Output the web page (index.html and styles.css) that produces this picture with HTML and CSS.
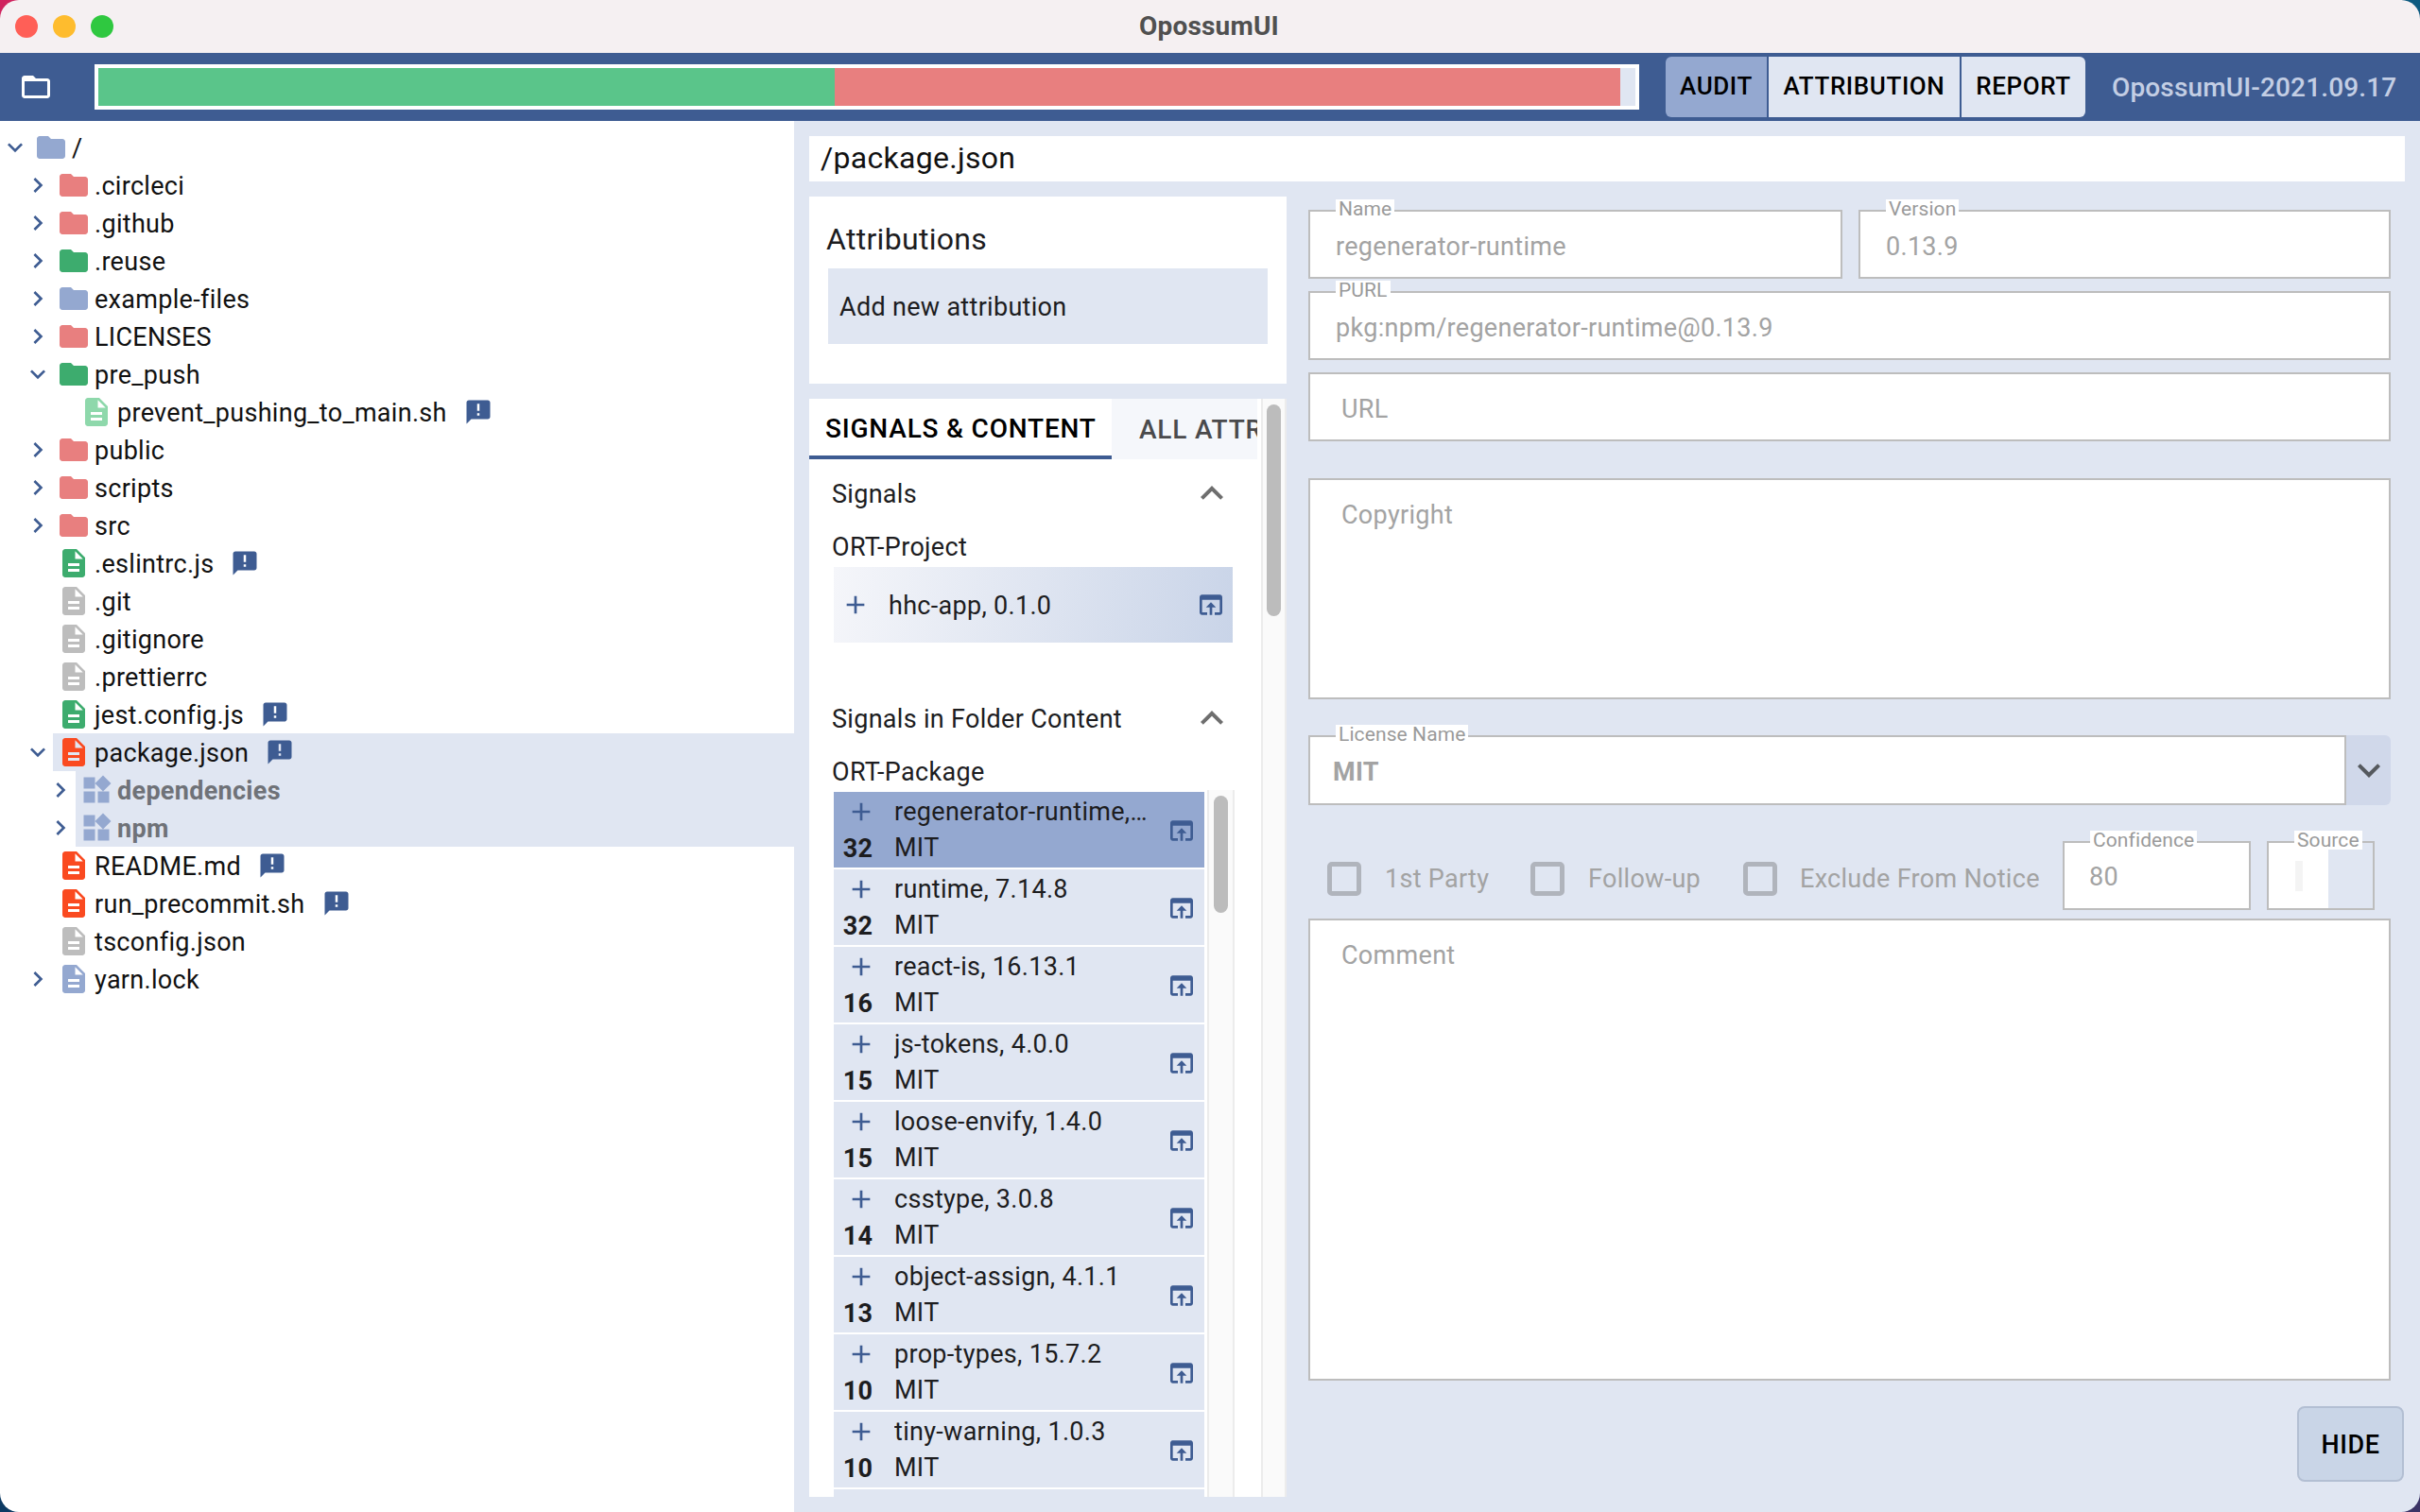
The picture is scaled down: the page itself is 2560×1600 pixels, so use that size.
FILE: index.html
```html
<!DOCTYPE html>
<html lang="en">
<head>
	<meta charset="UTF-8">
	<title>OpossumUI</title>
	<link rel="stylesheet" href="styles.css">
</head>
<body>
	<svg class="defs" width="0" height="0">
		<symbol id="i-right" viewBox="0 0 24 24"><path d="M10 6L8.59 7.41 13.17 12l-4.58 4.59L10 18l6-6z"/></symbol>
		<symbol id="i-down" viewBox="0 0 24 24"><path d="M16.59 8.59L12 13.17 7.41 8.59 6 10l6 6 6-6z"/></symbol>
		<symbol id="i-up" viewBox="0 0 24 24"><path d="M12 8l-6 6 1.41 1.41L12 10.83l4.59 4.58L18 14z"/></symbol>
		<symbol id="i-folder" viewBox="0 0 24 24"><path d="M10 4H4c-1.1 0-1.99.9-1.99 2L2 18c0 1.1.9 2 2 2h16c1.1 0 2-.9 2-2V8c0-1.1-.9-2-2-2h-8l-2-2z"/></symbol>
		<symbol id="i-file" viewBox="0 0 24 24"><path d="M14 2H6c-1.1 0-1.99.9-1.99 2L4 20c0 1.1.89 2 1.99 2H18c1.1 0 2-.9 2-2V8l-6-6zm2 16H8v-2h8v2zm0-4H8v-2h8v2zm-3-5V3.5L18.5 9H13z"/></symbol>
		<symbol id="i-note" viewBox="0 0 24 24"><path d="M20 2H4c-1.1 0-1.99.9-1.99 2L2 22l4-4h14c1.1 0 2-.9 2-2V4c0-1.1-.9-2-2-2zm-7 9h-2V5h2v6zm0 4h-2v-2h2v2z"/></symbol>
		<symbol id="i-widgets" viewBox="0 0 24 24"><path d="M13 13v8h8v-8h-8zM3 21h8v-8H3v8zM3 3v8h8V3H3zm13.66-1.31L11 7.34 16.66 13l5.66-5.66-5.66-5.65z"/></symbol>
		<symbol id="i-add" viewBox="0 0 24 24"><path d="M19 13h-6v6h-2v-6H5v-2h6V5h2v6h6v2z"/></symbol>
		<symbol id="i-open" viewBox="0 0 24 24"><path d="M19 4H5c-1.11 0-2 .9-2 2v12c0 1.1.89 2 2 2h4v-2H5V8h14v10h-4v2h4c1.1 0 2-.9 2-2V6c0-1.1-.9-2-2-2zm-7 6l-4 4h3v6h2v-6h3l-4-4z"/></symbol>
	</svg>

	<div id="window">
		<div id="titlebar">
			<div class="lights"><span class="light red"></span><span class="light yellow"></span><span class="light green"></span></div>
			<div class="title">OpossumUI</div>
		</div>

		<div id="topbar">
			<svg class="open-icon" viewBox="0 0 24 24"><path d="M20 6h-8l-2-2H4c-1.1 0-1.99.9-1.99 2L2 18c0 1.1.9 2 2 2h16c1.1 0 2-.9 2-2V8c0-1.1-.9-2-2-2zm0 12H4V8h16v10z"/></svg>
			<div class="progress"><div class="prog-green"></div><div class="prog-red"></div><div class="prog-rest"></div></div>
			<div class="views">
				<div class="view active">AUDIT</div>
				<div class="view">ATTRIBUTION</div>
				<div class="view">REPORT</div>
			</div>
			<div class="version">OpossumUI-2021.09.17</div>
		</div>

		<div id="main">
			<div id="tree">
				<div class="row"><svg class="chev"><use href="#i-down"/></svg><svg class="ico c-blue"><use href="#i-folder"/></svg><span>/</span></div>
				<div class="row l1"><svg class="chev"><use href="#i-right"/></svg><svg class="ico c-red"><use href="#i-folder"/></svg><span>.circleci</span></div>
				<div class="row l1"><svg class="chev"><use href="#i-right"/></svg><svg class="ico c-red"><use href="#i-folder"/></svg><span>.github</span></div>
				<div class="row l1"><svg class="chev"><use href="#i-right"/></svg><svg class="ico c-green"><use href="#i-folder"/></svg><span>.reuse</span></div>
				<div class="row l1"><svg class="chev"><use href="#i-right"/></svg><svg class="ico c-blue"><use href="#i-folder"/></svg><span>example-files</span></div>
				<div class="row l1"><svg class="chev"><use href="#i-right"/></svg><svg class="ico c-red"><use href="#i-folder"/></svg><span>LICENSES</span></div>
				<div class="row l1"><svg class="chev"><use href="#i-down"/></svg><svg class="ico c-green"><use href="#i-folder"/></svg><span>pre_push</span></div>
				<div class="row l2"><span class="chev"></span><svg class="ico c-mint"><use href="#i-file"/></svg><span>prevent_pushing_to_main.sh</span><svg class="note"><use href="#i-note"/></svg></div>
				<div class="row l1"><svg class="chev"><use href="#i-right"/></svg><svg class="ico c-red"><use href="#i-folder"/></svg><span>public</span></div>
				<div class="row l1"><svg class="chev"><use href="#i-right"/></svg><svg class="ico c-red"><use href="#i-folder"/></svg><span>scripts</span></div>
				<div class="row l1"><svg class="chev"><use href="#i-right"/></svg><svg class="ico c-red"><use href="#i-folder"/></svg><span>src</span></div>
				<div class="row l1"><span class="chev"></span><svg class="ico c-green"><use href="#i-file"/></svg><span>.eslintrc.js</span><svg class="note"><use href="#i-note"/></svg></div>
				<div class="row l1"><span class="chev"></span><svg class="ico c-grey"><use href="#i-file"/></svg><span>.git</span></div>
				<div class="row l1"><span class="chev"></span><svg class="ico c-grey"><use href="#i-file"/></svg><span>.gitignore</span></div>
				<div class="row l1"><span class="chev"></span><svg class="ico c-grey"><use href="#i-file"/></svg><span>.prettierrc</span></div>
				<div class="row l1"><span class="chev"></span><svg class="ico c-green"><use href="#i-file"/></svg><span>jest.config.js</span><svg class="note"><use href="#i-note"/></svg></div>
				<div class="row l1"><svg class="chev"><use href="#i-down"/></svg><div class="hl"><svg class="ico c-orange"><use href="#i-file"/></svg><span>package.json</span><svg class="note"><use href="#i-note"/></svg></div></div>
				<div class="row l2"><svg class="chev"><use href="#i-right"/></svg><div class="hl"><svg class="ico c-blue"><use href="#i-widgets"/></svg><span class="dim">dependencies</span></div></div>
				<div class="row l2"><svg class="chev"><use href="#i-right"/></svg><div class="hl"><svg class="ico c-blue"><use href="#i-widgets"/></svg><span class="dim">npm</span></div></div>
				<div class="row l1"><span class="chev"></span><svg class="ico c-orange"><use href="#i-file"/></svg><span>README.md</span><svg class="note"><use href="#i-note"/></svg></div>
				<div class="row l1"><span class="chev"></span><svg class="ico c-orange"><use href="#i-file"/></svg><span>run_precommit.sh</span><svg class="note"><use href="#i-note"/></svg></div>
				<div class="row l1"><span class="chev"></span><svg class="ico c-grey"><use href="#i-file"/></svg><span>tsconfig.json</span></div>
				<div class="row l1"><svg class="chev"><use href="#i-right"/></svg><svg class="ico c-blue"><use href="#i-file"/></svg><span>yarn.lock</span></div>
			</div>

			<div id="detail">
				<div class="path">/package.json</div>
				<div class="columns">
					<div class="side">
						<div class="card attributions">
							<div class="card-title">Attributions</div>
							<div class="add-new">Add new attribution</div>
						</div>
						<div class="card signals">
							<div class="signals-body">
								<div class="tabs">
									<div class="tab active">SIGNALS &amp; CONTENT</div>
									<div class="tab">ALL ATTRIBUTIONS</div>
								</div>
								<div class="section-head"><span>Signals</span><svg class="up"><use href="#i-up"/></svg></div>
								<div class="source-name">ORT-Project</div>
								<div class="signal-row">
									<svg class="plus"><use href="#i-add"/></svg>
									<span class="signal-name">hhc-app, 0.1.0</span>
									<svg class="open"><use href="#i-open"/></svg>
								</div>
								<div class="section-head second"><span>Signals in Folder Content</span><svg class="up"><use href="#i-up"/></svg></div>
								<div class="source-name">ORT-Package</div>
								<div class="list-wrap">
									<div class="list">
										<div class="item selected"><div class="count"><svg class="plus"><use href="#i-add"/></svg><b>32</b></div><div class="info"><div class="pkg">regenerator-runtime, 0.13.9</div><div>MIT</div></div><svg class="open"><use href="#i-open"/></svg></div>
										<div class="item"><div class="count"><svg class="plus"><use href="#i-add"/></svg><b>32</b></div><div class="info"><div class="pkg">runtime, 7.14.8</div><div>MIT</div></div><svg class="open"><use href="#i-open"/></svg></div>
										<div class="item"><div class="count"><svg class="plus"><use href="#i-add"/></svg><b>16</b></div><div class="info"><div class="pkg">react-is, 16.13.1</div><div>MIT</div></div><svg class="open"><use href="#i-open"/></svg></div>
										<div class="item"><div class="count"><svg class="plus"><use href="#i-add"/></svg><b>15</b></div><div class="info"><div class="pkg">js-tokens, 4.0.0</div><div>MIT</div></div><svg class="open"><use href="#i-open"/></svg></div>
										<div class="item"><div class="count"><svg class="plus"><use href="#i-add"/></svg><b>15</b></div><div class="info"><div class="pkg">loose-envify, 1.4.0</div><div>MIT</div></div><svg class="open"><use href="#i-open"/></svg></div>
										<div class="item"><div class="count"><svg class="plus"><use href="#i-add"/></svg><b>14</b></div><div class="info"><div class="pkg">csstype, 3.0.8</div><div>MIT</div></div><svg class="open"><use href="#i-open"/></svg></div>
										<div class="item"><div class="count"><svg class="plus"><use href="#i-add"/></svg><b>13</b></div><div class="info"><div class="pkg">object-assign, 4.1.1</div><div>MIT</div></div><svg class="open"><use href="#i-open"/></svg></div>
										<div class="item"><div class="count"><svg class="plus"><use href="#i-add"/></svg><b>10</b></div><div class="info"><div class="pkg">prop-types, 15.7.2</div><div>MIT</div></div><svg class="open"><use href="#i-open"/></svg></div>
										<div class="item"><div class="count"><svg class="plus"><use href="#i-add"/></svg><b>10</b></div><div class="info"><div class="pkg">tiny-warning, 1.0.3</div><div>MIT</div></div><svg class="open"><use href="#i-open"/></svg></div>
										<div class="item"></div>
									</div>
									<div class="scroll inner"><div class="thumb"></div></div>
								</div>
							</div>
							<div class="scroll outer"><div class="thumb"></div></div>
						</div>
					</div>

					<div class="form">
						<div class="line two">
							<div class="field"><label>Name</label>regenerator-runtime</div>
							<div class="field"><label>Version</label>0.13.9</div>
						</div>
						<div class="field"><label>PURL</label>pkg:npm/regenerator-runtime@0.13.9</div>
						<div class="field hint">URL</div>
						<div class="field hint area copyright">Copyright</div>
						<div class="license">
							<div class="field bold"><label>License Name</label>MIT</div>
							<div class="select-btn"><svg><use href="#i-down"/></svg></div>
						</div>
						<div class="checks">
							<span class="box"></span><span class="check-label first">1st Party</span>
							<span class="box"></span><span class="check-label second">Follow-up</span>
							<span class="box"></span><span class="check-label third">Exclude From Notice</span>
							<div class="field conf"><label>Confidence</label>80</div>
							<div class="field source"><label>Source</label><span class="caret"></span><span class="source-btn"></span></div>
						</div>
						<div class="field hint area comment">Comment</div>
						<div class="actions"><div class="hide-btn">HIDE</div></div>
					</div>
				</div>
			</div>
		</div>
	</div>
</body>
</html>
```

FILE: styles.css
```css
:root{
	--main-color: #3e5c92;
	--pale: #e0e6f2;
	--mid: #94a8d0;
	--line: #bdbdbd;
	--faint: #a3a3a3;
}

html, body{
	margin: 0;
	height: 100%;
	overflow: hidden;
}

body{
	font-family: Roboto, "Liberation Sans", sans-serif;
	font-size: 27px;
	letter-spacing: 0.3px;
	color: #1d1d1f;
	background:
		linear-gradient(90deg, #d0245f 50%, #0d5a80 50%) top / 100% 50% no-repeat,
		linear-gradient(90deg, #0d3a63 50%, #3b3466 50%) bottom / 100% 50% no-repeat;
}

.defs{
	display: none;
}

#window{
	height: 1600px;
	display: flex;
	flex-direction: column;
	border-radius: 20px;
	overflow: hidden;
}

#titlebar{
	height: 56px;
	flex: none;
	box-sizing: border-box;
	padding-bottom: 2px;
	padding-right: 2px;
	display: flex;
	align-items: center;
	justify-content: center;
	position: relative;
	background: #f5f0f2;
}

.lights{
	position: absolute;
	left: 16px;
	top: 16px;
	display: flex;
	gap: 16px;
}

.light{
	width: 24px;
	height: 24px;
	border-radius: 50%;
}

.red{ background: #ff5f57; }
.yellow{ background: #febc2e; }
.green{ background: #2fc840; }

.title{
	font-size: 28px;
	font-weight: 700;
	letter-spacing: 0.2px;
	color: #505050;
}

#topbar{
	height: 72px;
	flex: none;
	display: flex;
	align-items: center;
	background: var(--main-color);
}

.open-icon{
	width: 36px;
	height: 36px;
	margin-left: 20px;
	margin-right: 44px;
	fill: #fff;
	flex: none;
}

.progress{
	width: 1634px;
	height: 48px;
	box-sizing: border-box;
	border: 4px solid #fff;
	display: flex;
	flex: none;
}

.prog-green{ width: 779px; background: #5ac58a; }
.prog-red{ width: 831px; background: #e87f7f; }
.prog-rest{ flex: 1; background: var(--pale); }

.views{
	display: flex;
	margin-left: 28px;
	height: 64px;
	gap: 2px;
}

.view{
	display: flex;
	align-items: center;
	justify-content: center;
	padding-bottom: 2px;
	box-sizing: border-box;
	background: var(--pale);
	color: #000;
	font-weight: 500;
	font-size: 26px;
	letter-spacing: 0.6px;
}

.view:nth-child(1){ width: 107px; background: var(--mid); border-radius: 6px 0 0 6px; }
.view:nth-child(2){ width: 202px; }
.view:nth-child(3){ width: 131px; border-radius: 0 6px 6px 0; }

.version{
	margin-left: 28px;
	font-size: 28px;
	font-weight: 500;
	color: #c3cee4;
	letter-spacing: 0.15px;
	white-space: nowrap;
}

#main{
	flex: 1;
	display: flex;
	min-height: 0;
}

#tree{
	width: 840px;
	flex: none;
	padding-top: 8px;
	box-sizing: border-box;
	background: #fff;
}

.row{
	height: 40px;
	display: flex;
	align-items: center;
	color: #111;
}

.row span:not(.chev){
	padding-top: 2px;
}

.row.l1{ padding-left: 24px; }
.row.l2{ padding-left: 48px; }

.chev{
	width: 32px;
	height: 32px;
	flex: none;
	fill: var(--main-color);
}

.ico{
	width: 36px;
	height: 36px;
	flex: none;
	margin-left: 4px;
	margin-right: 4px;
}

.c-blue{ fill: var(--mid); }
.c-red{ fill: #e87f7f; }
.c-green{ fill: #3dac6e; }
.c-mint{ fill: #8ed8ab; }
.c-grey{ fill: #bdbdbd; }
.c-orange{ fill: #fa4a20; }

.note{
	width: 30px;
	height: 30px;
	margin-left: 18px;
	flex: none;
	fill: var(--main-color);
}

.hl{
	flex: 1;
	height: 40px;
	display: flex;
	align-items: center;
	background: var(--pale);
}

.dim{
	font-weight: 700;
	color: #6f7278;
}

#detail{
	flex: 1;
	min-width: 0;
	height: 1472px;
	padding: 16px;
	box-sizing: border-box;
	background: var(--pale);
	display: flex;
	flex-direction: column;
}

.path{
	height: 48px;
	flex: none;
	box-sizing: border-box;
	padding-bottom: 2px;
	display: flex;
	align-items: center;
	padding-left: 12px;
	font-size: 32px;
	color: #111;
	background: #fff;
}

.columns{
	flex: 1;
	min-height: 0;
	display: flex;
	margin-top: 16px;
}

.side{
	width: 505px;
	flex: none;
	display: flex;
	flex-direction: column;
	gap: 16px;
}

.card{
	background: #fff;
}

.attributions{
	height: 198px;
	padding: 24px 20px 0 20px;
	box-sizing: border-box;
}

.card-title{
	height: 42px;
	line-height: 42px;
	font-size: 32px;
	margin-left: -2px;
}

.add-new{
	height: 80px;
	margin-top: 10px;
	padding-left: 12px;
	padding-top: 1px;
	box-sizing: border-box;
	display: flex;
	align-items: center;
	background: var(--pale);
}

.signals{
	flex: 1;
	min-height: 0;
	display: flex;
	overflow: hidden;
}

.signals-body{
	width: 474px;
	flex: none;
	overflow: hidden;
}

.tabs{
	height: 64px;
	display: flex;
	background: #f5f7fb;
	overflow: hidden;
}

.tab{
	flex: none;
	display: flex;
	align-items: center;
	box-sizing: border-box;
	font-size: 28px;
	font-weight: 500;
	letter-spacing: 0.8px;
	color: #4a4a4c;
	padding-left: 29px;
	white-space: nowrap;
}

.tab.active{
	width: 320px;
	padding-left: 17px;
	padding-top: 2px;
	color: #000;
	background: #fff;
	border-bottom: 4px solid var(--main-color);
}

.section-head{
	height: 72px;
	margin-left: 24px;
	width: 426px;
	display: flex;
	align-items: center;
	justify-content: space-between;
}

.section-head span{
	padding-top: 1px;
}

.section-head.second{
	margin-top: 44px;
}

.up{
	width: 48px;
	height: 48px;
	fill: #6e6e6e;
}

.source-name{
	margin-left: 24px;
	height: 40px;
	line-height: 42px;
}

.signal-row{
	margin-left: 26px;
	width: 422px;
	height: 80px;
	margin-top: 2px;
	display: flex;
	align-items: center;
	background: linear-gradient(100deg, #f5f6fa, #c9d4e8);
}

.plus{
	width: 32px;
	height: 32px;
	flex: none;
	fill: var(--main-color);
}

.signal-row .plus{
	margin-left: 7px;
}

.signal-name{
	margin-left: 19px;
	padding-top: 1px;
	flex: 1;
}

.open{
	width: 32px;
	height: 32px;
	flex: none;
	fill: var(--main-color);
	margin-right: 7px;
}

.list-wrap{
	margin-left: 26px;
	display: flex;
}

.list{
	width: 392px;
	flex: none;
	padding-top: 2px;
	display: flex;
	flex-direction: column;
	gap: 2px;
}

.item{
	height: 80px;
	flex: none;
	display: flex;
	align-items: center;
	background: var(--pale);
}

.item.selected{
	background: var(--mid);
}

.count{
	width: 31px;
	margin-left: 10px;
	flex: none;
	display: flex;
	flex-direction: column;
	align-items: center;
}

.count .plus{
	margin-left: 7px;
}

.count b{
	font-weight: 700;
	line-height: 36px;
	margin-top: 5px;
	margin-bottom: -3px;
}

.info{
	width: 268px;
	flex: none;
	margin-left: 23px;
	line-height: 38px;
}

.pkg{
	white-space: nowrap;
	overflow: hidden;
	text-overflow: ellipsis;
}

.item .open{
	margin-left: 20px;
	margin-right: 0;
	margin-top: 2px;
}

.scroll{
	flex: none;
	box-sizing: border-box;
	background: #fafafa;
	border-left: 2px solid #ececec;
	border-right: 2px solid #ececec;
}

.scroll.outer{
	width: 27px;
	margin-left: 4px;
	padding: 6px 4px 0 4px;
}

.outer .thumb{
	height: 224px;
}

.scroll.inner{
	width: 29px;
	margin-left: 3px;
	height: 748px;
	padding: 6px 5px 0 5px;
}

.inner .thumb{
	height: 124px;
}

.thumb{
	border-radius: 8px;
	background: #bcbcbc;
}

.form{
	width: 1145px;
	margin-left: 23px;
	margin-top: 14px;
	display: flex;
	flex-direction: column;
	gap: 13px;
}

.line.two{
	display: flex;
	gap: 17px;
}

.line.two .field:first-child{
	width: 565px;
}

.line.two .field:last-child{
	flex: 1;
}

.field{
	position: relative;
	height: 73px;
	box-sizing: border-box;
	flex: none;
	display: flex;
	align-items: center;
	padding-left: 27px;
	padding-top: 4px;
	border: 2px solid var(--line);
	background: #fff;
	color: var(--faint);
}

.field label{
	position: absolute;
	left: 27px;
	top: -13px;
	padding: 0 3px;
	font-size: 21px;
	line-height: 20px;
	letter-spacing: 0.1px;
	background: #fff;
	color: #9a9a9a;
}

.field.hint{
	padding-left: 33px;
}

.field.area{
	align-items: flex-start;
	padding-top: 21px;
}

.copyright{
	height: 234px;
	margin-top: 26px;
}

.license{
	display: flex;
	margin-top: 25px;
	height: 74px;
}

.license .field{
	flex: 1;
	height: 74px;
	padding-left: 24px;
}

.bold{
	font-weight: 700;
}

.bold label{
	font-weight: 400;
}

.select-btn{
	width: 47px;
	flex: none;
	display: flex;
	align-items: center;
	justify-content: center;
	background: #d0d8ea;
	border-radius: 0 6px 6px 0;
}

.select-btn svg{
	width: 48px;
	height: 48px;
	flex: none;
	fill: #55595e;
}

.checks{
	height: 73px;
	margin-top: 25px;
	display: flex;
	align-items: center;
	padding-left: 20px;
}

.box{
	width: 36px;
	height: 36px;
	box-sizing: border-box;
	flex: none;
	border: 5px solid #b0b4bc;
	border-radius: 5px;
	margin-top: 6px;
}

.check-label{
	margin-top: 6px;
	margin-left: 25px;
	color: var(--faint);
	white-space: nowrap;
}

.check-label.first{ width: 154px; }
.check-label.second{ width: 164px; }
.check-label.third{ width: 278px; margin-left: 24px; }

.field.conf{
	width: 199px;
	padding-left: 26px;
	padding-top: 3px;
}

.conf label{
	left: 27px;
}

.field.source{
	width: 114px;
	margin-left: 17px;
	padding: 0;
}

.caret{
	width: 8px;
	height: 32px;
	margin-left: 28px;
	background: #f4f4f4;
}

.source-btn{
	position: absolute;
	top: 0;
	right: 0;
	bottom: 0;
	width: 47px;
	background: var(--pale);
}

.source label{
	left: 27px;
	z-index: 1;
}

.comment{
	height: 489px;
	margin-top: -4px;
}

.actions{
	display: flex;
	justify-content: flex-end;
	margin-top: 14px;
	margin-right: -14px;
}

.hide-btn{
	width: 113px;
	height: 80px;
	box-sizing: border-box;
	padding-top: 2px;
	display: flex;
	align-items: center;
	justify-content: center;
	border: 2px solid #b3bfd3;
	border-radius: 8px;
	background: #c9d5e7;
	color: #000;
	font-weight: 500;
	letter-spacing: 0.6px;
}
```
